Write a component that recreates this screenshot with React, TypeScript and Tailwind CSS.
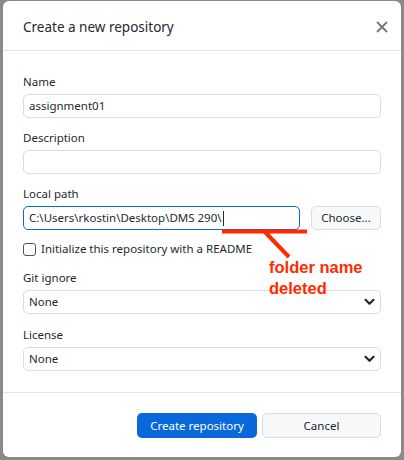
import React from 'react';

const FONT = { fontFamily: '"Noto Sans", "Segoe UI", sans-serif' };

function Field({ label, children }: { label: string; children: React.ReactNode }) {
  return (
    <div className="flex flex-col">
      <label className="mb-1 h-4 text-[11.5px] leading-4 text-[#24292f]">{label}</label>
      {children}
    </div>
  );
}

function TextBox({ value = '', focused = false, className = '' }: { value?: string; focused?: boolean; className?: string }) {
  return (
    <div
      className={
        'flex h-6 items-center rounded-[5px] bg-white px-[5px] text-[11.5px] text-[#24292f] ' +
        (focused ? 'border-[1.5px] border-[#0969da]' : 'border border-[#d8dde3]') +
        ' ' +
        className
      }
    >
      <span className="whitespace-pre">{value}</span>
      {focused && <span className="ml-px h-[15px] w-px bg-[#24292f]" />}
    </div>
  );
}

function Select({ value }: { value: string }) {
  return (
    <div className="flex h-6 items-center justify-between rounded-[5px] border border-[#d8dde3] bg-white pl-[5px] pr-[5px] text-[11.5px] text-[#24292f]">
      <span>{value}</span>
      <svg width="11" height="8" viewBox="0 0 11 8">
        <path d="M1.5 1.8 L5.5 5.8 L9.5 1.8" fill="none" stroke="#24292f" strokeWidth="2.2" strokeLinecap="round" strokeLinejoin="round" />
      </svg>
    </div>
  );
}

export default function App() {
  return (
    <div className="h-[460px] w-[404px] bg-[#8a8a8a] pl-[3px] pt-px" style={FONT}>
      <div className="relative flex h-[456px] w-[398px] flex-col overflow-hidden rounded-[6px] bg-white">
        <div className="flex h-[50px] shrink-0 items-center justify-between border-b border-[#e1e4e8] pl-5 pr-[13px] pt-1">
          <h1 className="text-[13.5px] text-[#24292f]">Create a new repository</h1>
          <svg width="12" height="12" viewBox="0 0 12 12" className="-mt-0.5">
            <path d="M1.5 1.5 L10.5 10.5 M10.5 1.5 L1.5 10.5" stroke="#6e7781" strokeWidth="1.8" strokeLinecap="round" />
          </svg>
        </div>

        <div className="flex flex-1 flex-col px-5 pt-[23px]">
          <Field label="Name">
            <TextBox value="assignment01" />
          </Field>
          <div className="mt-3">
            <Field label="Description">
              <TextBox />
            </Field>
          </div>
          <div className="mt-3">
            <Field label="Local path">
              <div className="flex gap-[11px]">
                <TextBox value="C:\Users\rkostin\Desktop\DMS 290\" focused className="w-[277px]" />
                <button className="h-6 flex-1 rounded-[5px] border border-[#d8dde3] bg-[#f6f8fa] text-[11.5px] text-[#24292f]">
                  Choose...
                </button>
              </div>
            </Field>
          </div>
          <div className="mt-[12px] flex h-[14px] items-center gap-[5px] text-[11.5px] text-[#24292f]">
            <span className="h-[13px] w-[13px] rounded-[3px] border border-[#555]" />
            <span>Initialize this repository with a README</span>
          </div>
          <div className="mt-[14px]">
            <Field label="Git ignore">
              <Select value="None" />
            </Field>
          </div>
          <div className="mt-[13px]">
            <Field label="License">
              <Select value="None" />
            </Field>
          </div>
        </div>

        <div className="flex h-[65px] shrink-0 items-center justify-end gap-[5px] border-t border-[#e1e4e8] pr-5 pt-px">
          <button className="h-[25px] w-[120px] rounded-[5px] bg-[#0969da] text-[11.5px] text-white">Create repository</button>
          <button className="h-[25px] w-[119px] rounded-[5px] border border-[#d8dde3] bg-[#f6f8fa] text-[11.5px] text-[#24292f]">
            Cancel
          </button>
        </div>

        <svg className="pointer-events-none absolute left-0 top-0" width="398" height="456">
          <path d="M219 230.5 L304 230.5" stroke="#ff2a00" strokeWidth="4" />
          <path d="M262 231 L286 256" stroke="#ff2a00" strokeWidth="4" />
        </svg>
        <div
          className="absolute left-[266px] top-[256px] text-[16.5px] font-bold leading-[21px] text-[#ff2a00]"
          style={{ fontFamily: '"Liberation Sans", Arial, sans-serif' }}
        >
          folder name
          <br />
          deleted
        </div>
      </div>
    </div>
  );
}
